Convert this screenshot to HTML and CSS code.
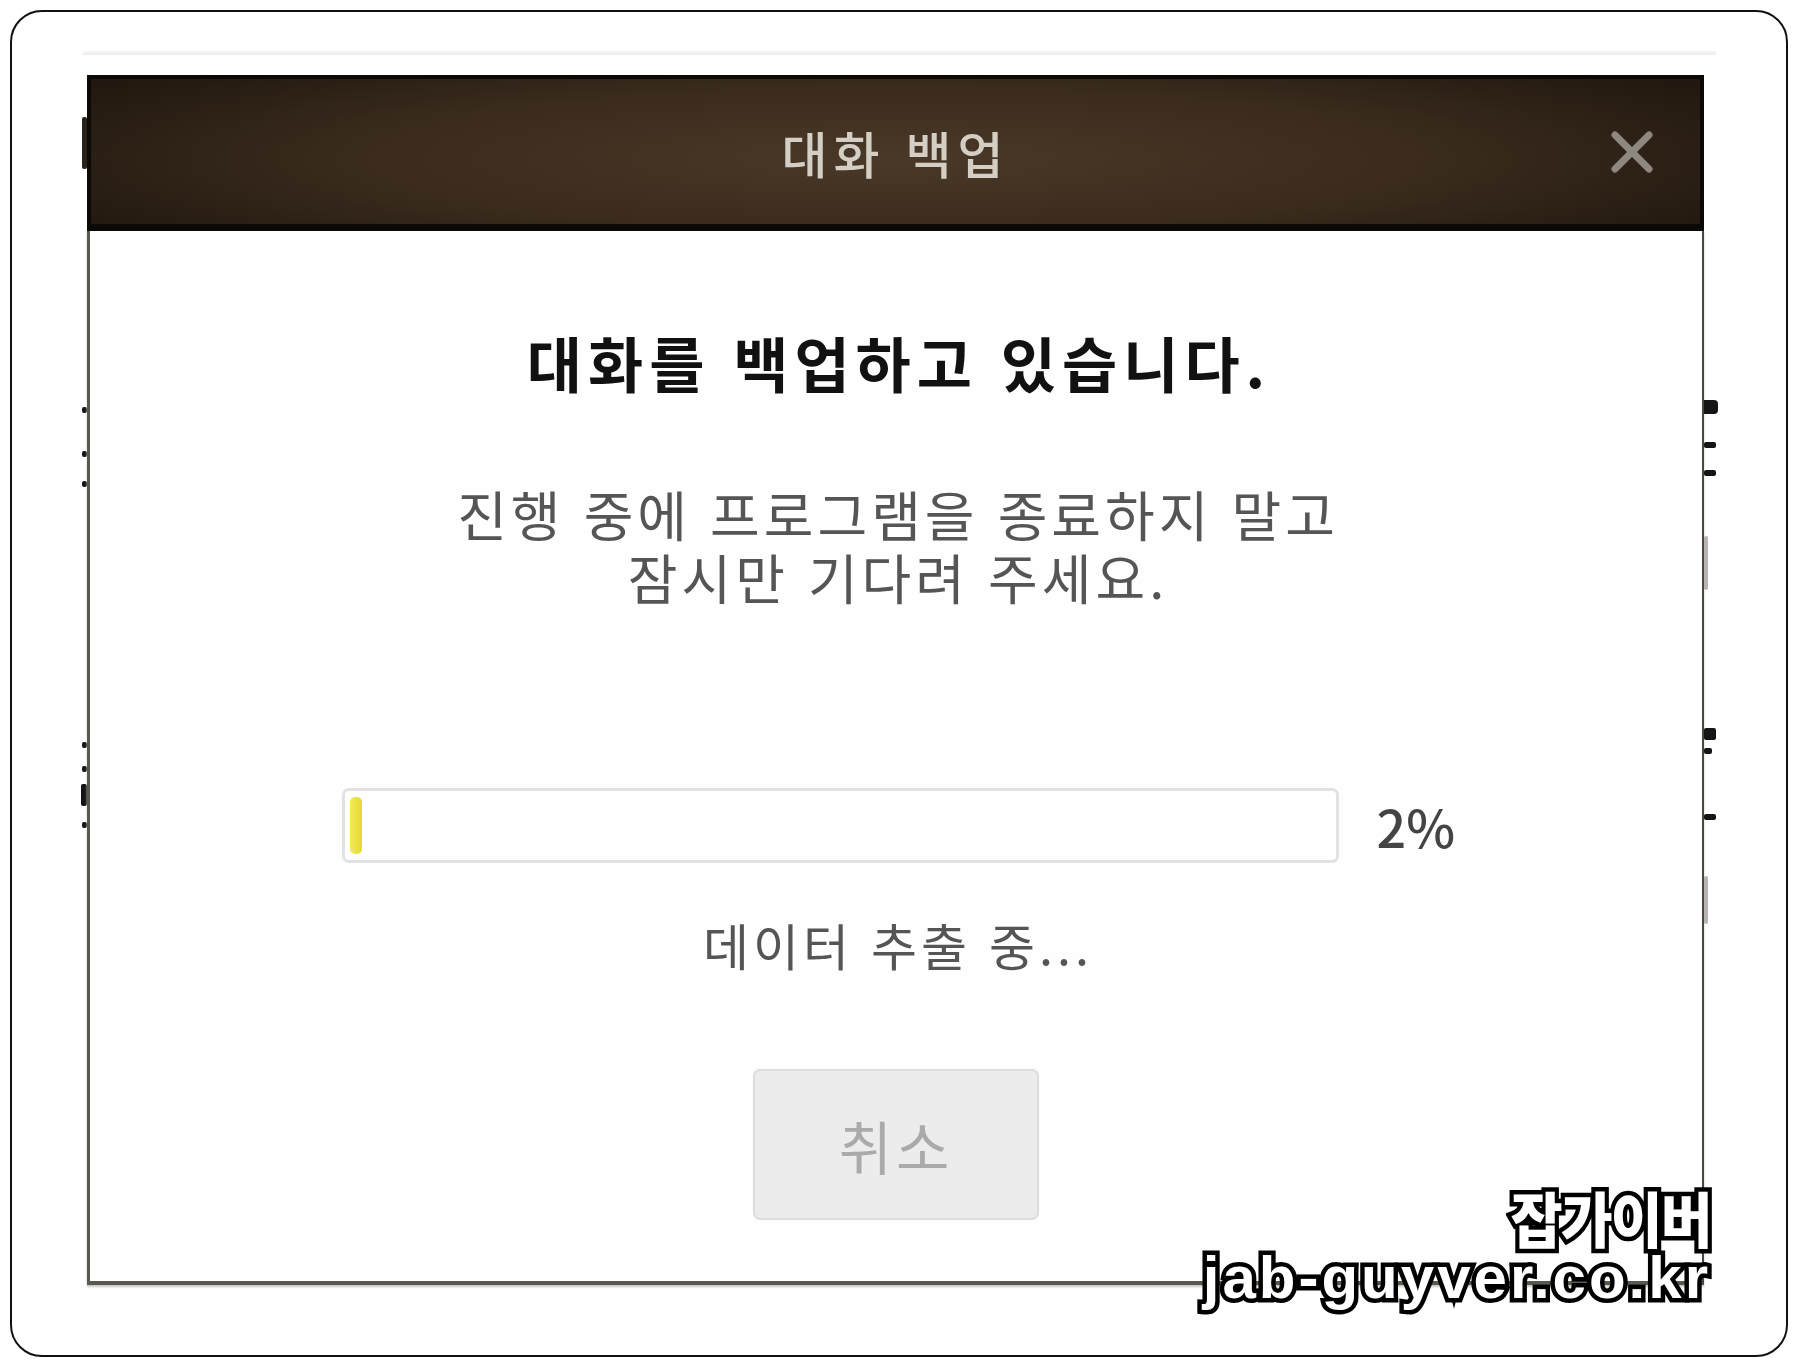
FILE: index.html
```html
<!DOCTYPE html>
<html lang="ko">
  <head>
    <meta charset="utf-8" />
    <title>대화 백업</title>
    <link rel="stylesheet" href="styles.css">
  </head>
  <body>
    <div class="frame">
      <div class="backdrop">
        <div class="backdrop-line"></div>

        <!-- bits of the window behind the dialog -->
        <div class="gutter gutter-left">
          <span class="tick tick-head"></span>
          <span class="tick t1"></span>
          <span class="tick t2"></span>
          <span class="tick t3"></span>
          <span class="tick t4"></span>
          <span class="tick t5"></span>
          <span class="tick t6"></span>
          <span class="tick t7"></span>
        </div>

        <div class="dialog">
          <div class="dialog-head">
            <span></span>
            <h1 class="dialog-title">대화 백업</h1>
            <button class="close" aria-label="닫기">
              <svg width="46" height="44" viewBox="0 0 46 44">
                <path d="M6 5 L40 39 M40 5 L6 39" stroke="#8f8880" stroke-width="7" stroke-linecap="round" fill="none" />
              </svg>
            </button>
          </div>

          <div class="dialog-body">
            <h2 class="heading">대화를 백업하고 있습니다.</h2>
            <p class="notice">진행 중에 프로그램을 종료하지 말고<br>잠시만 기다려 주세요.</p>

            <div class="progress-row">
              <div class="progress">
                <div class="progress-fill" style="width: 2%"></div>
              </div>
              <span class="percent">2%</span>
            </div>

            <p class="status">데이터 추출 중...</p>

            <button class="cancel">취소</button>
          </div>
        </div>

        <div class="gutter gutter-right">
          <span class="tick r1"></span>
          <span class="tick r2"></span>
          <span class="tick r3"></span>
          <span class="tick faint r4"></span>
          <span class="tick r5"></span>
          <span class="tick r6"></span>
          <span class="tick r7"></span>
          <span class="tick faint r8"></span>
        </div>
      </div>

      <div class="watermark">
        <span class="wm-name">잡가이버</span>
        <span class="wm-url">jab-guyver.co.kr</span>
      </div>
    </div>
  </body>
</html>
```

FILE: styles.css
```css
/* Page */
body {
  margin: 0;
  background: #fff;
  font-family: "Noto Sans CJK KR", "Noto Sans", sans-serif;
}

.frame {
  position: relative;
  box-sizing: border-box;
  width: 1778px;
  height: 1347px;
  margin: 10px 0 0 10px;
  border: 2px solid #111;
  border-radius: 32px;
  overflow: hidden;
}

/* Window behind the dialog */
.backdrop {
  display: grid;
  grid-template-columns: 6px 1617px 12px;
  margin: 39px 0 0 69px;
}

.backdrop-line {
  grid-column: 1 / -1;
  height: 4px;
  margin: 0 0 20px 2px;
  background: linear-gradient(#f6f6f6, #ececec);
}

.gutter {
  display: flex;
  flex-direction: column;
}

.gutter-left {
  align-items: flex-end;
}

.tick {
  display: block;
  width: 5px;
  height: 6px;
  background: #151515;
  border-radius: 2px;
}

.tick.faint {
  background: #b9b3b6;
  width: 4px;
}

.tick-head { margin-top: 42px; height: 52px; width: 5px; background: #2a211a; }
.t1 { margin-top: 238px; }
.t2 { margin-top: 38px; }
.t3 { margin-top: 24px; }
.t4 { margin-top: 255px; }
.t5 { margin-top: 18px; }
.t6 { margin-top: 12px; height: 22px; width: 6px; }
.t7 { margin-top: 16px; }

.r1 { margin-top: 325px; width: 14px; height: 14px; border-radius: 0 4px 4px 0; }
.r2 { margin-top: 28px; width: 12px; }
.r3 { margin-top: 22px; width: 12px; }
.r4 { margin-top: 60px; height: 54px; }
.r5 { margin-top: 138px; width: 12px; height: 12px; }
.r6 { margin-top: 8px; width: 8px; }
.r7 { margin-top: 60px; width: 12px; }
.r8 { margin-top: 56px; height: 48px; }

/* Dialog */
.dialog {
  display: flex;
  flex-direction: column;
  height: 1210px;
}

.dialog-head {
  display: grid;
  grid-template-columns: 1fr auto 1fr;
  align-items: center;
  height: 156px;
  box-sizing: border-box;
  border: 4px solid #0b0805;
  border-bottom-width: 7px;
  background: radial-gradient(ellipse 60% 90% at 50% 55%, #4a3928 0%, #3a2b1d 55%, #21180f 100%);
}

.dialog-title {
  margin: 0;
  font-size: 50px;
  font-weight: 500;
  letter-spacing: 6px;
  color: #d5cec5;
}

.close {
  justify-self: end;
  margin-right: 45px;
  padding: 0;
  border: 0;
  background: none;
  line-height: 0;
  cursor: pointer;
}

.dialog-body {
  flex: 1;
  display: flex;
  flex-direction: column;
  align-items: center;
  background: #fefefe;
  border-left: 3px solid #5a5852;
  border-right: 2px solid #4a4843;
  border-bottom: 4px solid #5a5852;
  box-shadow: 0 2px 2px #c8c6be;
}

.heading {
  margin: 96px 0 0 6px;
  font-size: 60px;
  line-height: 70px;
  font-weight: 700;
  letter-spacing: 6px;
  color: #111;
}

.notice {
  margin: 85px 0 0 4px;
  font-size: 54px;
  line-height: 63px;
  letter-spacing: 4px;
  text-align: center;
  color: #555;
}

.progress-row {
  display: flex;
  align-items: center;
  gap: 38px;
  margin-top: 180px;
}

.progress {
  box-sizing: border-box;
  width: 997px;
  height: 75px;
  padding: 6px 5px;
  border: 3px solid #e2e2e2;
  border-radius: 7px;
  background: #fff;
}

.progress-fill {
  height: 100%;
  max-width: 12px;
  min-width: 10px;
  border-radius: 5px;
  background: linear-gradient(90deg, #f3ea5a, #e4da30);
}

.percent {
  width: 74px;
  font-size: 52px;
  line-height: 60px;
  font-weight: 500;
  color: #444;
}

.status {
  margin: 51px 0 0 4px;
  font-size: 50px;
  line-height: 60px;
  letter-spacing: 4px;
  color: #555;
}

.cancel {
  width: 286px;
  height: 151px;
  margin-top: 95px;
  border: 2px solid #dcdcdc;
  border-radius: 7px;
  background: #ececec;
  font-family: inherit;
  font-size: 58px;
  letter-spacing: 4px;
  color: #aaa;
  cursor: default;
}

/* Watermark */
.watermark {
  position: absolute;
  right: 75px;
  top: 1174px;
  display: flex;
  flex-direction: column;
  align-items: flex-end;
  color: #fff;
  -webkit-text-stroke: 9px #000;
  paint-order: stroke fill;
}

.wm-name {
  font-family: "Noto Sans CJK KR", sans-serif;
  font-weight: 900;
  font-size: 60px;
  line-height: 62px;
  letter-spacing: -2px;
  transform: scaleX(0.94);
  transform-origin: right center;
}

.wm-url {
  font-family: "Liberation Sans", sans-serif;
  font-weight: 700;
  font-size: 60px;
  line-height: 60px;
  letter-spacing: 3px;
}
```
